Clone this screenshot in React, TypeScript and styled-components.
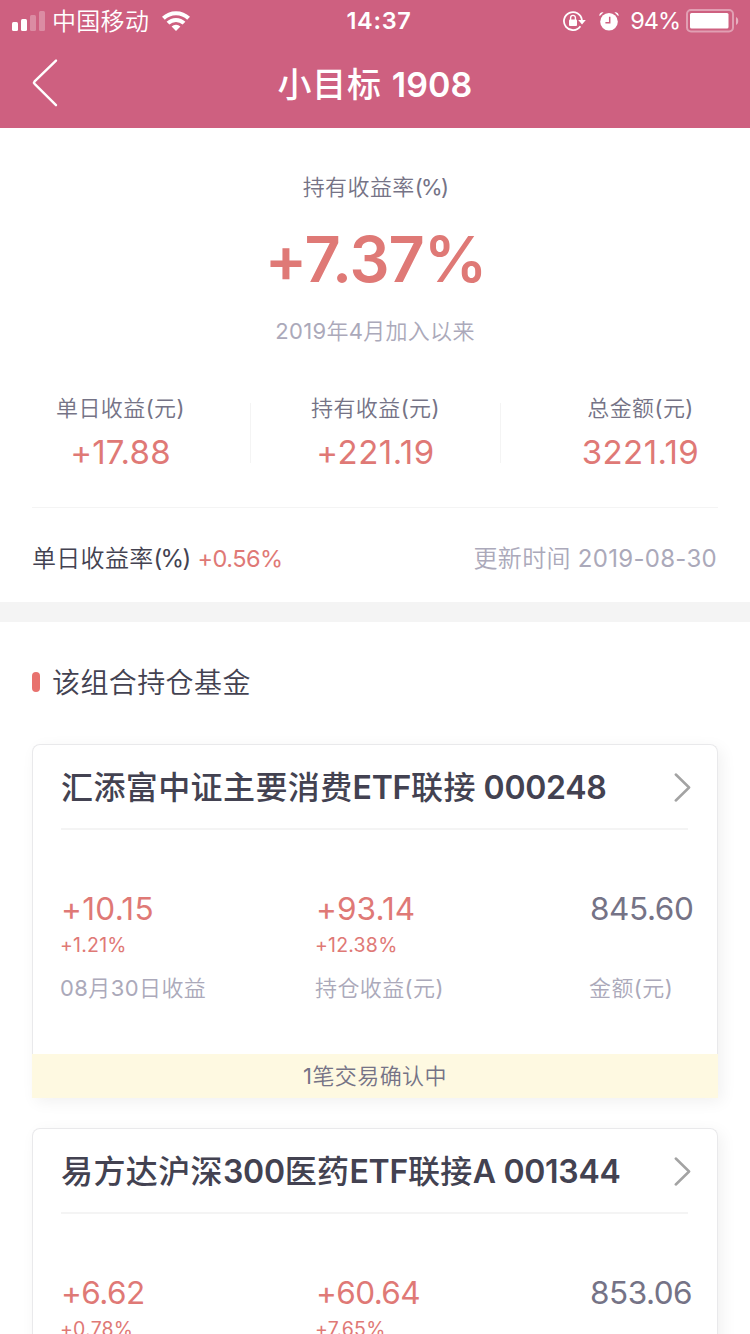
import React from "react";
import styled, { createGlobalStyle, css } from "styled-components";

const color = {
  brand: "#ce6080",
  rise: "#df7976",
  ink: "#434251",
  mid: "#757386",
  soft: "#aba9ba",
  line: "#f4f4f4",
};

const GlobalStyle = createGlobalStyle`
  *, *::before, *::after { box-sizing: border-box; }
  html, body { margin: 0; padding: 0; }
  body {
    width: 750px;
    height: 1334px;
    overflow: hidden;
    background: #fff;
    font-family: Inter, "Noto Sans CJK SC", sans-serif;
    -webkit-font-smoothing: antialiased;
  }
`;

const type = (size: number, line: number, spacing = 0) => css`
  font-size: ${size}px;
  line-height: ${line}px;
  letter-spacing: ${spacing}px;
  white-space: nowrap;
`;

/* keeps plus signs and dashes at their low, lowercase height */
const lowSigns = css`
  font-feature-settings: "calt" 0;
`;

const Screen = styled.div`
  width: 750px;
  height: 1334px;
  overflow: hidden;
  background: #fff;
`;

const Header = styled.header`
  height: 128px;
  background: ${color.brand};
  color: #fff;
`;

const StatusBar = styled.div`
  display: grid;
  grid-template-columns: 1fr auto 1fr;
  align-items: center;
  height: 40px;
  padding: 0 11px 0 12px;
`;

const StatusSide = styled.div<{ $end?: boolean }>`
  display: flex;
  align-items: center;
  justify-content: ${(p) => (p.$end ? "flex-end" : "flex-start")};
`;

const Carrier = styled.span`
  ${type(24, 40, 0.3)}
  margin: 2px 13px 0 7px;
  font-weight: 350;
`;

const Clock = styled.span`
  ${type(23.5, 40, 0.7)}
  font-weight: 600;
  margin: 0 0 0 7px;
`;

const StatusIcons = styled.span`
  display: flex;
  align-items: center;
  gap: 13px;
  padding-bottom: 1px;
`;

const Percent = styled.span`
  ${type(23.5, 40, -1)}
  margin: 0 6px 0 11px;
`;

const NavBar = styled.div`
  display: grid;
  grid-template-columns: 100px 1fr 100px;
  align-items: center;
  height: 88px;
`;

const BackButton = styled.button`
  display: flex;
  align-items: center;
  height: 88px;
  padding: 0 0 3px 30px;
  border: 0;
  background: none;
  color: inherit;
`;

const Title = styled.h1`
  ${type(34, 88, 0.8)}
  margin: 0;
  padding-top: 1px;
  text-align: center;
  font-weight: 500;
`;

const TitleNumber = styled.span`
  font-weight: 600;
  letter-spacing: 0.1px;
`;

const Summary = styled.section`
  height: 474px;
  padding: 39px 0 0;
  text-align: center;
`;

const SummaryLabel = styled.div`
  ${type(22, 40, 0.4)}
  font-weight: 350;
  color: ${color.mid};
`;

const Unit = styled.span`
  font-weight: 400;
  letter-spacing: -1.7px;
`;

const Rate = styled.div`
  ${type(63, 80, -1)}
  ${lowSigns}
  margin-top: 12px;
  padding-left: 1px;
  font-weight: 600;
  color: ${color.rise};
`;

const Since = styled.div`
  ${type(22, 40, 0.3)}
  margin-top: 12px;
  font-weight: 350;
  color: ${color.soft};
`;

const Stats = styled.div`
  display: grid;
  grid-template-columns: repeat(3, 250px);
  margin-top: 52px;
  height: 60px;
`;

const Stat = styled.div<{ $inset: string }>`
  display: flex;
  flex-direction: column;
  align-items: center;
  height: 60px;
  padding: ${(p) => p.$inset};
  & + & {
    border-left: 1px solid ${color.line};
  }
`;

const StatLabel = styled.span`
  ${type(22, 32, 0.4)}
  margin-top: -11px;
  font-weight: 350;
  color: ${color.mid};
`;

const StatValue = styled.span<{ $spacing: number }>`
  ${type(33, 40, 0)}
  ${lowSigns}
  letter-spacing: ${(p) => p.$spacing}px;
  margin-top: 8px;
  color: ${color.rise};
`;

const DailyRow = styled.div`
  display: flex;
  justify-content: space-between;
  height: 95px;
  margin: 44px 32px 0;
  border-top: 1px solid ${color.line};
  color: ${color.ink};
`;

const DailyRate = styled.span`
  ${type(24, 102, 0.3)}
  font-weight: 350;
`;

const DailyValue = styled.span`
  ${type(23.5, 102, -0.5)}
  ${lowSigns}
  margin-left: 8px;
  font-weight: 400;
  color: ${color.rise};
`;

const Updated = styled.span`
  ${type(24, 102, 0.3)}
  ${lowSigns}
  padding-right: 1px;
  font-weight: 350;
  color: ${color.soft};
`;

const Band = styled.div`
  height: 20px;
  background: #f4f4f4;
`;

const SectionTitle = styled.h2`
  ${type(28, 42, 0.4)}
  display: flex;
  align-items: center;
  gap: 12px;
  height: 40px;
  margin: 40px 32px 42px;
  font-weight: 350;
  color: ${color.ink};
  &::before {
    content: "";
    width: 8px;
    height: 20px;
    border-radius: 4px;
    background: #e8726e;
  }
`;

const SectionText = styled.span`
  padding-top: 2px;
`;

const Card = styled.article`
  width: 686px;
  height: 354px;
  margin: 0 32px 30px;
  display: flex;
  flex-direction: column;
  border-radius: 8px 8px 0 0;
  box-shadow: 4px 4px 16px rgba(0, 0, 0, 0.06);
  background: #fff;
`;

const CardBody = styled.div`
  flex: 1;
  padding: 0 29px 0 28px;
  border: 1px solid #e9e9eb;
  border-bottom: 0;
  border-radius: 8px 8px 0 0;
`;

const CardHead = styled.div`
  display: flex;
  align-items: center;
  justify-content: space-between;
  height: 85px;
  border-bottom: 2px solid ${color.line};
`;

const FundName = styled.h3`
  ${type(32, 84, 0.4)}
  margin: 0;
  padding-top: 3px;
  font-weight: 500;
  color: ${color.ink};
`;

const BoldLatin = styled.span`
  font-weight: 600;
  letter-spacing: -0.3px;
`;

const Latin = styled.span`
  font-weight: 400;
`;

const Figures = styled.div`
  display: grid;
  grid-template-columns: 255px 274px 1fr;
  padding-top: 59px;
`;

const Figure = styled.div`
  display: flex;
  flex-direction: column;
`;

const Amount = styled.span<{ $plain?: boolean; $spacing: number }>`
  ${type(31.5, 40, 0)}
  ${lowSigns}
  letter-spacing: ${(p) => p.$spacing}px;
  color: ${(p) => (p.$plain ? color.mid : color.rise)};
`;

const Change = styled.span`
  ${type(19.5, 32, 0.2)}
  ${lowSigns}
  height: 32px;
  margin-left: -1px;
  color: ${color.rise};
`;

const Caption = styled.span`
  ${type(22, 40, 0.4)}
  margin: 7px 0 0 -1px;
  font-weight: 350;
  color: ${color.soft};
`;

const Notice = styled.div`
  ${type(22, 45, 0.4)}
  height: 44px;
  text-align: center;
  font-weight: 350;
  color: ${color.mid};
  background: #fef9e1;
`;

const Signal = () => (
  <svg width="33" height="20" viewBox="0 0 33 20" fill="#fff">
    <rect x="0" y="11" width="6" height="9" rx="1.5" />
    <rect x="9" y="8" width="6" height="12" rx="1.5" />
    <rect x="18" y="4" width="6" height="16" rx="1.5" opacity=".28" />
    <rect x="27" y="0" width="6" height="20" rx="1.5" opacity=".28" />
  </svg>
);

const Wifi = () => (
  <svg width="28" height="20" viewBox="0 0 28 20" fill="none" stroke="#fff" strokeWidth="4">
    <path d="M1.4 7.3A18 18 0 0 1 26.6 7.3" />
    <path d="M6 12.2A11.4 11.4 0 0 1 22 12.2" />
    <path d="M14 20l-4.4-4.4a6.2 6.2 0 0 1 8.8 0z" fill="#fff" stroke="none" />
  </svg>
);

const RotationLock = () => (
  <svg width="23" height="20" viewBox="0 0 23 20" fill="none" stroke="#fff" strokeWidth="1.8">
    <path d="M17.4 15.2A9 9 0 1 1 18.9 9" />
    <path d="M15.2 9h7.6l-3.8 4.6z" fill="#fff" stroke="none" />
    <rect x="6" y="8.6" width="8" height="6.4" rx="1" fill="#fff" stroke="none" />
    <path d="M7.6 9V6.800a2.400 2.400 0 0 1 4.800 0V9" strokeWidth="1.4" />
  </svg>
);

const Alarm = () => (
  <svg width="20" height="20" viewBox="0 0 20 20" fill="#fff">
    <circle cx="10" cy="10.8" r="8.8" />
    <path d="M.4 4.8C.2 2 2 .8 4.6 1.2L.8 5zM19.6 4.8C19.8 2 18 .8 15.4 1.2L19.2 5z" />
    <path d="M10.7 5.8v6H6.4" fill="none" stroke={color.brand} strokeWidth="1.5" />
  </svg>
);

const Battery = () => (
  <svg width="53" height="24" viewBox="0 0 53 24">
    <rect x="1" y="1" width="46" height="21.5" rx="4" fill="none" stroke="#fff" strokeWidth="2" opacity=".4" />
    <rect x="4" y="4" width="38.5" height="15.5" rx="1.5" fill="#fff" />
    <path d="M50 8c3 1.2 3 6.8 0 8z" fill="#fff" opacity=".5" />
  </svg>
);

const BackIcon = () => (
  <svg width="30" height="50" viewBox="0 0 30 50" fill="none" stroke="#fff" strokeWidth="2.4" strokeLinecap="round" strokeLinejoin="round">
    <path d="M26 2.6L4.6 23.4Q3.5 24.6 4.6 25.8L26 47.2" />
  </svg>
);

const MoreIcon = () => (
  <svg width="20" height="30" viewBox="0 0 20 30" fill="none" stroke="#a3a3a3" strokeWidth="2.5" strokeLinecap="round" strokeLinejoin="round">
    <path d="M4.8 1.5l13.3 13L4.8 27.5" />
  </svg>
);

const MoreSlot = styled.span`
  display: flex;
  width: 20px;
  margin-right: -3px;
  padding-top: 2px;
`;

interface Cell {
  amount: string;
  change?: string;
  caption: string;
  spacing: number;
}

interface Fund {
  name: string;
  cells: Cell[];
  notice?: string;
}

const stats = [
  { label: "单日收益(元)", value: "+17.88", inset: "0 9px 0 0", spacing: 0.2 },
  { label: "持有收益(元)", value: "+221.19", inset: "0", spacing: 0.5 },
  { label: "总金额(元)", value: "3221.19", inset: "0 0 0 30px", spacing: 0.4 },
];

const funds: Fund[] = [
  {
    name: "汇添富中证主要消费ETF联接 000248",
    cells: [
      { amount: "+10.15", change: "+1.21%", caption: "08月30日收益", spacing: 0.3 },
      { amount: "+93.14", change: "+12.38%", caption: "持仓收益(元)", spacing: 0.1 },
      { amount: "845.60", caption: "金额(元)", spacing: -0.4 },
    ],
    notice: "1笔交易确认中",
  },
  {
    name: "易方达沪深300医药ETF联接A 001344",
    cells: [
      { amount: "+6.62", change: "+0.78%", caption: "08月30日收益", spacing: -0.5 },
      { amount: "+60.64", change: "+7.65%", caption: "持仓收益(元)", spacing: -0.6 },
      { amount: "853.06", caption: "金额(元)", spacing: -0.5 },
    ],
  },
];

/* sets letters and digits one step heavier than the Chinese text around them */
const mixed = (text: string, Part: React.ElementType = Latin) =>
  text
    .split(/([A-Za-z0-9()% -]+)/)
    .map((part, i) => (i % 2 ? <Part key={i}>{part}</Part> : part));

const FundCard = ({ fund }: { fund: Fund }) => (
  <Card>
    <CardBody>
      <CardHead>
        <FundName>{mixed(fund.name, BoldLatin)}</FundName>
        <MoreSlot><MoreIcon /></MoreSlot>
      </CardHead>
      <Figures>
        {fund.cells.map((c) => (
          <Figure key={c.caption}>
            <Amount $plain={!c.change} $spacing={c.spacing}>{c.amount}</Amount>
            <Change>{c.change}</Change>
            <Caption>{mixed(c.caption)}</Caption>
          </Figure>
        ))}
      </Figures>
    </CardBody>
    {fund.notice && <Notice>{mixed(fund.notice)}</Notice>}
  </Card>
);

export default function App() {
  return (
    <Screen>
      <GlobalStyle />
      <Header>
        <StatusBar>
          <StatusSide>
            <Signal />
            <Carrier>中国移动</Carrier>
            <Wifi />
          </StatusSide>
          <Clock>14:37</Clock>
          <StatusSide $end>
            <StatusIcons>
              <RotationLock />
              <Alarm />
            </StatusIcons>
            <Percent>94%</Percent>
            <Battery />
          </StatusSide>
        </StatusBar>
        <NavBar>
          <BackButton aria-label="返回"><BackIcon /></BackButton>
          <Title>小目标 <TitleNumber>1908</TitleNumber></Title>
        </NavBar>
      </Header>

      <Summary>
        <SummaryLabel>持有收益率<Unit>(%)</Unit></SummaryLabel>
        <Rate>+7.37%</Rate>
        <Since>{mixed("2019年4月加入以来")}</Since>
        <Stats>
          {stats.map((s) => (
            <Stat key={s.label} $inset={s.inset}>
              <StatLabel>{mixed(s.label)}</StatLabel>
              <StatValue $spacing={s.spacing}>{s.value}</StatValue>
            </Stat>
          ))}
        </Stats>
        <DailyRow>
          <DailyRate>
            单日收益率<Unit>(%)</Unit><DailyValue>+0.56%</DailyValue>
          </DailyRate>
          <Updated>{mixed("更新时间 2019-08-30")}</Updated>
        </DailyRow>
      </Summary>

      <Band />

      <SectionTitle><SectionText>该组合持仓基金</SectionText></SectionTitle>
      {funds.map((f) => (
        <FundCard key={f.name} fund={f} />
      ))}
    </Screen>
  );
}
